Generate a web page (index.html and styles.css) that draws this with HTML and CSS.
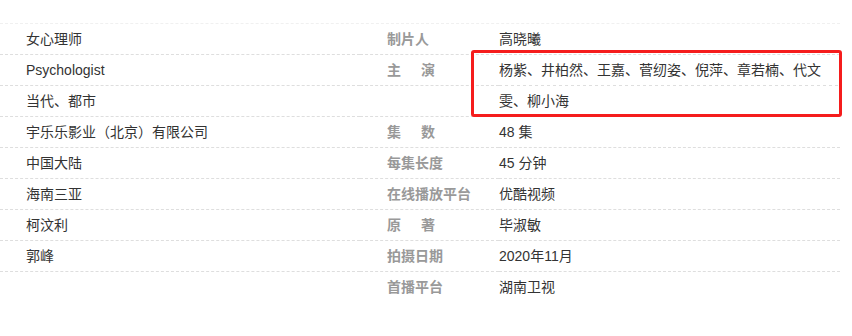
FILE: index.html
```html
<!DOCTYPE html>
<html lang="zh-CN">
<head>
  <meta charset="UTF-8" />
  <meta name="viewport" content="width=device-width, initial-scale=1.0"/>
  <title>女心理师 - 基本信息</title>
  <link rel="stylesheet" href="styles.css">
</head>
<body>
  <div class="basic-info">
    <div class="cell">女心理师</div>
    <div class="name">制片人</div>
    <div class="value">高晓曦</div>

    <div class="cell">Psychologist</div>
    <div class="name wide">主演</div>
    <div class="value cast">杨紫、井柏然、王嘉、菅纫姿、倪萍、章若楠、代文雯、柳小海</div>

    <div class="cell">当代、都市</div>
    <div class="name"></div>

    <div class="cell">宇乐乐影业（北京）有限公司</div>
    <div class="name wide">集数</div>
    <div class="value">48 集</div>

    <div class="cell">中国大陆</div>
    <div class="name">每集长度</div>
    <div class="value">45 分钟</div>

    <div class="cell">海南三亚</div>
    <div class="name">在线播放平台</div>
    <div class="value">优酷视频</div>

    <div class="cell">柯汶利</div>
    <div class="name wide">原著</div>
    <div class="value">毕淑敏</div>

    <div class="cell">郭峰</div>
    <div class="name">拍摄日期</div>
    <div class="value">2020年11月</div>

    <div class="cell"></div>
    <div class="name">首播平台</div>
    <div class="value">湖南卫视</div>
  </div>
</body>
</html>
```

FILE: styles.css
```css
* { margin: 0; padding: 0; box-sizing: border-box; }
body {
  font-family: "Liberation Sans", "Noto Sans CJK SC", sans-serif;
  font-size: 14px;
  color: #333;
  background: #fff;
}
.basic-info {
  width: 840px;
  margin-top: 23px;
  border-top: 1px dashed #f0f0f0;
  display: grid;
  grid-template-columns: 360px 139px 341px;
  grid-auto-rows: 31px;
}
.basic-info > div {
  line-height: 30px;
  border-bottom: 1px dashed #dedede;
  white-space: nowrap;
}
/* last row has no rule under it */
.basic-info > div:nth-last-child(-n+3) { border-bottom: none; }
.cell { padding-left: 26px; }
.name {
  padding-left: 27px;
  color: #999;
  font-weight: bold;
}
.name.wide { letter-spacing: 20px; }
.value { padding-right: 12px; }
.value.cast {
  grid-row: span 2;
  white-space: normal;
  line-height: 31px;
  position: relative;
  background-image: repeating-linear-gradient(to right, #dedede 0 3px, transparent 3px 6px);
  background-size: 100% 1px;
  background-position: 0 30px;
  background-repeat: no-repeat;
}
/* highlight frame around the cast list */
.value.cast::after {
  content: "";
  position: absolute;
  left: -28px;
  top: -5px;
  right: -2px;
  bottom: -1px;
  border: 3px solid #f51c1c;
  border-radius: 3px;
}
```
